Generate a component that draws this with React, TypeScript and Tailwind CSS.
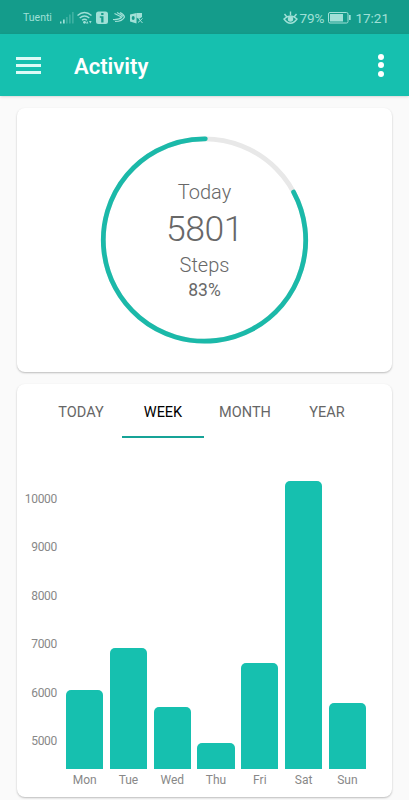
const days = [
  { label: "Mon", height: 79 },
  { label: "Tue", height: 120.5 },
  { label: "Wed", height: 62 },
  { label: "Thu", height: 26 },
  { label: "Fri", height: 106 },
  { label: "Sat", height: 287.5 },
  { label: "Sun", height: 66 },
];

const ticks = [10000, 9000, 8000, 7000, 6000, 5000];

const tabs = ["TODAY", "WEEK", "MONTH", "YEAR"];

function StatusBar() {
  return (
    <div className="flex h-[34px] items-center bg-[#149c8b] pl-[23px] pt-px text-[#a0e0d7]">
      <span className="w-[36px] text-[10.5px]">Tuenti</span>
      <svg width="86" height="16" viewBox="59 9 86 16" fill="currentColor">
        <path d="M60 20.500h1.500v2H60zM63 18.500h1.700v4H63z" />
        <path opacity=".3" d="M66 16h1.700v6.500H66zM69 13.500h1.700v9H69zM72 11h1.700v11.500H72z" />
        <g fill="none" stroke="currentColor" strokeWidth="1.400">
          <path d="M77.500 14.500q7-6 14 0M79.700 17q4.800-4 9.600 0M82 19.300q2.500-2 5 0" />
        </g>
        <circle cx="84.500" cy="21.300" r="1.400" />
        <path d="M87.200 20l1.200 2.500H86zM90.300 22.500L89 20h2.600z" />
        <path
          fillRule="evenodd"
          d="M98.500 10.500h7q2.500 0 2.500 2.500v7.500q0 2.500-2.500 2.500h-7Q96 23 96 20.500V13q0-2.500 2.500-2.500zM101.200 12v2h2.300v-2zM99.800 15.200v1.500h1.400v4.800h2.300v-6.300z"
        />
        <g fill="none" stroke="currentColor" strokeWidth="1.200">
          <path d="M114.500 12.500q4 2 7 3.500M117 11.500q4 2 6 4M120 11.500q4 2 4.500 4.500-2 4.500-9.500 4.500M113 18.500q6 .5 9-2.500" />
        </g>
        <path
          fillRule="evenodd"
          d="M130 13.500l6.500-1.500v10.500L130 20.500zM133.200 15a1.500 2 0 100 4 1.500 2 0 100-4z"
        />
        <path d="M136.500 12h5.500v4l-3 2-2.500-1.500z" />
        <path fill="none" stroke="currentColor" d="M138 21.500l4.500-4M139 18l3.500 4" />
      </svg>
      <svg className="ml-auto mr-px" width="15" height="14" viewBox="0 0 15 14" fill="none" stroke="currentColor" strokeWidth="1.400">
        <path d="M1 8q6.500-6 13 0-6.500 8.500-13 0zM1.500 3L3.500 5.500M7.500 .5v3.500M13.500 3L11.500 5.500" />
        <circle cx="7.500" cy="8" r="2" fill="currentColor" />
      </svg>
      <span className="w-[29px] pt-px text-[13.500px]">79%</span>
      <svg width="24" height="12" viewBox="0 0 24 12" fill="currentColor">
        <rect x=".5" y=".5" width="19.500" height="10.500" rx="1.500" fill="none" stroke="currentColor" />
        <path d="M2 2h13v7.500H2zM21 3h1.700v5H21z" />
      </svg>
      <span className="ml-[3px] mr-[20px] pt-px text-[13.500px]">17:21</span>
    </div>
  );
}

function Header() {
  return (
    <header className="flex h-[62px] items-center bg-[#16c0af] pl-4 pr-[25px] text-white shadow-sm">
      <div className="flex w-[25px] flex-col gap-1">
        <span className="h-[3px] bg-[#dcfbf7]" />
        <span className="h-[3px] bg-[#dcfbf7]" />
        <span className="h-[3px] bg-[#dcfbf7]" />
      </div>
      <h1 className="ml-[33px] pt-[2px] text-[22px] font-semibold">Activity</h1>
      <div className="ml-auto flex flex-col gap-[2.500px]">
        <span className="size-[6px] rounded-full bg-white" />
        <span className="size-[6px] rounded-full bg-white" />
        <span className="size-[6px] rounded-full bg-white" />
      </div>
    </header>
  );
}

function StepsCard() {
  return (
    <section className="grid h-[264px] place-items-center rounded-lg bg-white shadow-[0_1px_2px_rgba(0,0,0,0.25)]">
      <svg className="col-start-1 row-start-1" width="209" height="210" viewBox="0 0 209 210" fill="none" strokeWidth="4.800">
        <circle cx="104.500" cy="105" r="101.200" stroke="#e8e8e8" />
        <circle
          cx="104.500"
          cy="105"
          r="101.200"
          stroke="#1bb9a9"
          pathLength="100"
          strokeDasharray="83 100"
          strokeLinecap="round"
          transform="rotate(-28.300 104.500 105)"
        />
      </svg>
      <div className="col-start-1 row-start-1 flex flex-col items-center pt-1 text-[#686868]">
        <span className="text-[20px] leading-6 font-light">Today</span>
        <span className="text-[35.500px] leading-[50px] font-light tracking-[-0.500px]">5801</span>
        <span className="text-[20px] leading-[23px] font-light">Steps</span>
        <span className="text-[17.500px] leading-[27px]">83%</span>
      </div>
    </section>
  );
}

function ChartCard() {
  return (
    <section className="mt-3 h-[413px] rounded-lg bg-white shadow-[0_1px_2px_rgba(0,0,0,0.25)]">
      <div className="ml-[23px] flex">
        {tabs.map((tab) => (
          <button
            key={tab}
            className={
              tab === "WEEK"
                ? "h-[54px] w-[82px] border-b-2 border-[#16a397] pt-[5px] text-[14.500px] text-black"
                : "h-[54px] w-[82px] border-b-2 border-transparent pt-[5px] text-[14.500px] text-[#666]"
            }
          >
            {tab}
          </button>
        ))}
      </div>
      <div className="flex h-[330.500px] pl-1">
        <div className="w-9 pt-[50.500px] text-right text-[12px] tracking-[-0.300px] text-[#888]">
          {ticks.map((tick) => (
            <div key={tick} className="h-[48.500px] leading-5">
              {tick}
            </div>
          ))}
        </div>
        <div className="ml-[9px] flex items-end gap-[6.500px]">
          {days.map((day) => (
            <div key={day.label} className="w-[37.300px] rounded-t-[5px] bg-[#16c0af]" style={{ height: day.height }} />
          ))}
        </div>
      </div>
      <div className="ml-[49px] flex gap-[6.500px] text-center text-[12px] leading-[22px] text-[#888]">
        {days.map((day) => (
          <span key={day.label} className="w-[37.300px]">
            {day.label}
          </span>
        ))}
      </div>
    </section>
  );
}

export default function App() {
  return (
    <div className="h-[800px] w-[409px] overflow-hidden bg-[#fafafa] font-[Roboto,sans-serif]">
      <StatusBar />
      <Header />
      <main className="px-[17px] pt-3">
        <StepsCard />
        <ChartCard />
      </main>
    </div>
  );
}
